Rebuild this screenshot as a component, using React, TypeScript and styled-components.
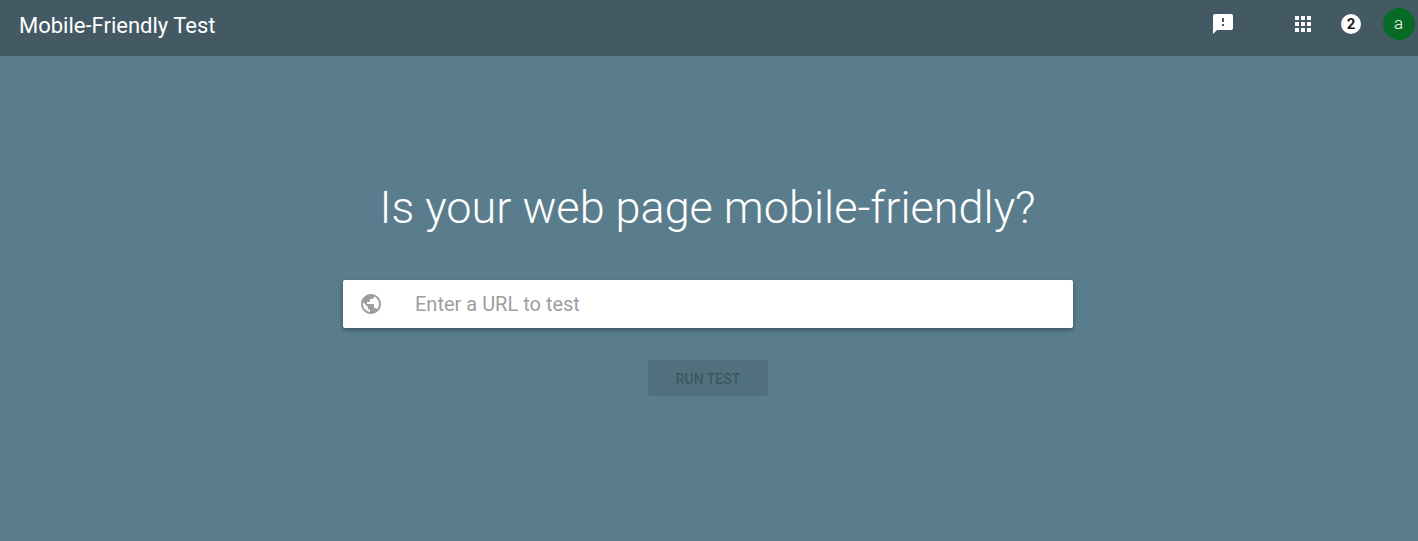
import styled, { createGlobalStyle } from "styled-components";

const GlobalStyle = createGlobalStyle`
  html, body {
    margin: 0;
    padding: 0;
    height: 100%;
    font-family: Roboto, "Liberation Sans", sans-serif;
  }
  #root {
    height: 100%;
  }
`;

const FEEDBACK =
  "M20 2H4c-1.1 0-1.99.9-1.99 2L2 22l4-4h14c1.1 0 2-.9 2-2V4c0-1.1-.9-2-2-2zm-7 12h-2v-2h2v2zm0-4h-2V6h2v4z";
const APPS =
  "M4 8h4V4H4v4zm6 12h4v-4h-4v4zm-6 0h4v-4H4v4zm0-6h4v-4H4v4zm6 0h4v-4h-4v4zm6-10v4h4V4h-4zm-6 4h4V4h-4v4zm6 6h4v-4h-4v4zm0 6h4v-4h-4v4z";
const GLOBE =
  "M12 2C6.48 2 2 6.48 2 12s4.48 10 10 10 10-4.48 10-10S17.52 2 12 2zm-1 17.93c-3.95-.49-7-3.85-7-7.93 0-.62.08-1.21.21-1.79L9 15v1c0 1.1.9 2 2 2v1.93zm6.9-2.54c-.26-.81-1-1.39-1.9-1.39h-1v-3c0-.55-.45-1-1-1H8v-2h2c.55 0 1-.45 1-1V7h2c1.1 0 2-.9 2-2v-.41c2.93 1.19 5 4.06 5 7.41 0 2.08-.8 3.97-2.1 5.39z";

const App = () => {
  return (
    <Page>
      <GlobalStyle />
      <Header>
        <Title>Mobile-Friendly Test</Title>
        <HeaderActions>
          <FeedbackIcon viewBox="0 0 24 24">
            <path d={FEEDBACK} />
          </FeedbackIcon>
          <AppsIcon viewBox="0 0 24 24">
            <path d={APPS} />
          </AppsIcon>
          <NotifyBadge>2</NotifyBadge>
          <Avatar>a</Avatar>
        </HeaderActions>
      </Header>
      <Main>
        <Heading>Is your web page mobile-friendly?</Heading>
        <UrlBox>
          <GlobeIcon viewBox="0 0 24 24">
            <path d={GLOBE} />
          </GlobeIcon>
          <UrlInput placeholder="Enter a URL to test" />
        </UrlBox>
        <RunBtn disabled>RUN TEST</RunBtn>
      </Main>
    </Page>
  );
};

/** Styles */
const Page = styled.div`
  height: 100%;
  min-height: 541px;
  display: flex;
  flex-direction: column;
  background-color: #5a7d8d;
  overflow: hidden;
`;

const Header = styled.header`
  height: 56px;
  flex: none;
  display: flex;
  align-items: center;
  justify-content: space-between;
  padding: 0 3px 0 19px;
  background-color: #435a65;
`;

const Title = styled.div`
  color: #fff;
  font-size: 22px;
  font-weight: 400;
  line-height: 50px;
  margin-bottom: 4px;
`;

const HeaderActions = styled.div`
  display: flex;
  align-items: center;
  margin-bottom: 8px;
`;

const FeedbackIcon = styled.svg`
  width: 24px;
  height: 24px;
  fill: #fff;
  margin-right: 56px;
`;

const AppsIcon = styled.svg`
  width: 24px;
  height: 24px;
  fill: #fff;
  margin-right: 26px;
`;

const NotifyBadge = styled.div`
  width: 20px;
  height: 20px;
  border-radius: 50%;
  background-color: #fff;
  color: #202124;
  font-size: 15px;
  font-weight: 700;
  line-height: 20px;
  text-align: center;
  margin-right: 22px;
`;

const Avatar = styled.div`
  width: 32px;
  height: 32px;
  padding-right: 1px;
  box-sizing: border-box;
  border-radius: 50%;
  background-color: #076b26;
  color: #fff;
  font-size: 17px;
  font-weight: 300;
  line-height: 30px;
  text-align: center;
`;

const Main = styled.main`
  flex: 1;
  display: flex;
  flex-direction: column;
  align-items: center;
  padding: 122px 2px 0 0;
`;

const Heading = styled.h1`
  margin: 0 1px 0 0;
  color: #fff;
  font-size: 45px;
  font-weight: 300;
  line-height: 60px;
`;

const UrlBox = styled.div`
  width: 730px;
  height: 48px;
  margin-top: 42px;
  display: flex;
  align-items: center;
  background-color: #fff;
  border-radius: 2px;
  box-shadow: 0 2px 4px rgba(0, 0, 0, 0.35);
`;

const GlobeIcon = styled.svg`
  width: 24px;
  height: 24px;
  flex: none;
  fill: #9e9e9e;
  margin-left: 16px;
`;

const UrlInput = styled.input`
  flex: 1;
  height: 100%;
  margin-left: 32px;
  padding: 0;
  border: none;
  outline: none;
  background: transparent;
  font-family: inherit;
  font-size: 20px;
  color: #212121;

  &::placeholder {
    color: #9e9e9e;
    opacity: 1;
  }
`;

const RunBtn = styled.button`
  width: 120px;
  height: 36px;
  margin-top: 32px;
  padding: 1px 0 0;
  border: none;
  border-radius: 3px;
  background-color: rgba(0, 0, 0, 0.1);
  color: rgba(0, 0, 0, 0.26);
  font-family: inherit;
  font-size: 14px;
  font-weight: 500;
`;

/** Exports */
export default App;
